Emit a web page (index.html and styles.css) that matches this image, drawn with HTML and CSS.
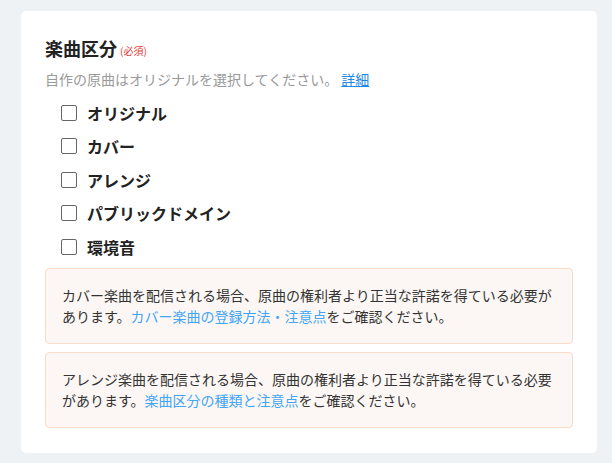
FILE: index.html
```html
<!DOCTYPE html>
<html lang="ja">
  <head>
    <meta charset="UTF-8">
    <title>楽曲区分</title>
    <link rel="stylesheet" href="styles.css">
  </head>
  <body>
    <div class="card">
      <h2 class="field-title">楽曲区分<span class="required">(必須)</span></h2>
      <p class="field-help">自作の原曲はオリジナルを選択してください。 <a href="#" class="help-link">詳細</a></p>

      <ul class="choices">
        <li><label><span class="box"></span>オリジナル</label></li>
        <li><label><span class="box"></span>カバー</label></li>
        <li><label><span class="box"></span>アレンジ</label></li>
        <li><label><span class="box"></span>パブリックドメイン</label></li>
        <li><label><span class="box"></span>環境音</label></li>
      </ul>

      <div class="notice">
        カバー楽曲を配信される場合、原曲の権利者より正当な許諾を得ている必要があります。<a href="#">カバー楽曲の登録方法・注意点</a>をご確認ください。
      </div>
      <div class="notice">
        アレンジ楽曲を配信される場合、原曲の権利者より正当な許諾を得ている必要があります。<a href="#">楽曲区分の種類と注意点</a>をご確認ください。
      </div>
    </div>
  </body>
</html>
```

FILE: styles.css
```css
body {
  margin: 0;
  padding: 11px 15px 11px 21px;
  background-color: #eef2f5;
  font-family: "Noto Sans CJK JP", "Noto Sans", sans-serif;
  color: #333;
}

.card {
  background-color: #fff;
  border-radius: 5px;
  padding: 24px 24px 25px 24px;
}

.field-title {
  margin: 0;
  font-size: 18px;
  line-height: 26px;
  font-weight: bold;
  color: #222;
}

.required {
  font-size: 10px;
  font-weight: normal;
  color: #e53935;
  margin-left: 3px;
  vertical-align: 1px;
}

.field-help {
  margin: 5px 0 0 0;
  font-size: 14px;
  line-height: 20px;
  color: #999;
}

.help-link {
  color: #1e88e5;
  text-decoration: underline;
}

.choices {
  list-style: none;
  margin: 7px 0 0 0;
  padding: 0 0 0 16px;
}

.choices li {
  height: 33.5px;
  display: flex;
  align-items: center;
}

.choices label {
  display: flex;
  align-items: center;
  font-size: 16px;
  font-weight: bold;
  color: #222;
  cursor: pointer;
}

.box {
  width: 14px;
  height: 14px;
  border: 1px solid #666;
  border-radius: 2px;
  margin-right: 10px;
  background-color: #fff;
}

.notice {
  margin-top: 8px;
  padding: 16px 16px;
  background-color: #fcf7f4;
  border: 1px solid #fbdccb;
  border-radius: 4px;
  font-size: 14px;
  line-height: 21px;
  color: #333;
}

.choices + .notice {
  margin-top: 4px;
}

.notice a {
  color: #42a5f5;
  text-decoration: none;
}
```
